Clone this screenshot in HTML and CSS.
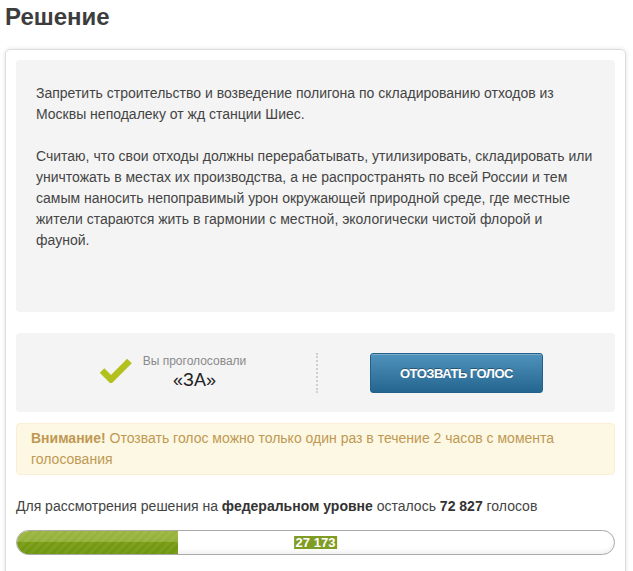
FILE: index.html
```html
<!DOCTYPE html>
<html lang="ru">
<head>
<meta charset="utf-8">
<title>Решение</title>
<link rel="stylesheet" href="styles.css">
</head>
<body>
<h1 class="title">Решение</h1>
<div class="card">
  <div class="text-box">
    <p>Запретить строительство и возведение полигона по складированию отходов из Москвы неподалеку от жд станции Шиес.</p>
    <p>Считаю, что свои отходы должны перерабатывать, утилизировать, складировать или уничтожать в местах их производства, а не распространять по всей России и тем самым наносить непоправимый урон окружающей природной среде, где местные жители стараются жить в гармонии с местной, экологически чистой флорой и фауной.</p>
  </div>
  <div class="vote-box">
    <div class="vote-left">
      <svg class="check" width="32" height="24" viewBox="0 0 32 24"><path d="M2 11.5 L11 20.5 L29.5 2" fill="none" stroke="#b3c11f" stroke-width="6.5" stroke-linecap="butt" stroke-linejoin="miter"/></svg>
      <div class="vote-info">
        <div class="vote-label">Вы проголосовали</div>
        <div class="vote-value">«ЗА»</div>
      </div>
    </div>
    <div class="vote-right">
      <button class="revoke">ОТОЗВАТЬ ГОЛОС</button>
    </div>
  </div>
  <div class="alert"><b>Внимание!</b> Отозвать голос можно только один раз в течение 2 часов с момента голосования</div>
  <p class="remain">Для рассмотрения решения на <b>федеральном уровне</b> осталось <b>72 827</b> голосов</p>
  <div class="progress">
    <div class="progress-fill" style="width:27%"></div>
    <span class="progress-label">27 173</span>
  </div>
</div>
</body>
</html>
```
FILE: styles.css
```css
* { box-sizing: border-box; }
html, body { background: #fff; }
body {
  margin: 0;
  padding: 0 7px 0 5px;
  font-family: "Liberation Sans", Arial, sans-serif;
  font-size: 14px;
  color: #444;
}
.title {
  margin: 3px 0 18px 0;
  font-size: 24px;
  line-height: 28px;
  font-weight: bold;
  color: #3d3d3d;
}
.card {
  border: 1px solid #dcdcdc;
  border-radius: 5px;
  box-shadow: 0 0 4px rgba(0,0,0,0.12);
  padding: 10px 10px 16px 10px;
  height: 560px;
}
.text-box {
  background: #f4f4f4;
  border-radius: 4px;
  padding: 23px 20px 61px 20px;
  line-height: 21px;
}
.text-box p { margin: 0; }
.text-box p + p { margin-top: 21px; }
.vote-box {
  margin-top: 21px;
  background: #f4f4f4;
  border-radius: 4px;
  display: grid;
  grid-template-columns: 300px 1fr;
  height: 79px;
}
.vote-left {
  display: flex;
  align-items: center;
  justify-content: center;
  padding-left: 14px;
}
.check { margin-right: 11px; margin-top: -3px; }
.vote-info { display: flex; flex-direction: column; align-items: center; }
.vote-label {
  font-size: 12px;
  line-height: 15px;
  color: #8a8a8a;
}
.vote-value {
  font-size: 18px;
  line-height: 22px;
  color: #222;
}
.vote-right {
  margin: 20px 0 19px 0;
  border-left: 2px dotted #cfcfcf;
  padding-left: 52px;
}
.revoke {
  display: block;
  width: 173px;
  height: 40px;
  border: 1px solid #23608a;
  border-radius: 3px;
  background: linear-gradient(#4f92bb, #256690);
  box-shadow: inset 0 1px 0 rgba(255,255,255,0.25);
  color: #fff;
  font-family: "Liberation Sans", Arial, sans-serif;
  font-weight: bold;
  font-size: 13px;
  letter-spacing: -0.5px;
  text-shadow: 0 -1px 0 rgba(0,0,0,0.35);
  padding: 0;
  cursor: pointer;
}
.alert {
  margin-top: 11px;
  background: #fcf8e3;
  border: 1px solid #fbeed5;
  border-radius: 4px;
  color: #c09853;
  padding: 4px 14px 4px 14px;
  line-height: 21px;
}
.alert b { color: #c09853; }
.remain {
  margin: 21px 0 0 0;
  line-height: 21px;
  color: #444;
}
.remain b { color: #333; }
.progress {
  position: relative;
  margin-top: 13px;
  height: 25px;
  border: 1px solid #a9a9a9;
  border-radius: 13px;
  background: #fff;
  box-shadow: inset 0 -3px 4px rgba(0,0,0,0.06);
  overflow: hidden;
}
.progress-fill {
  height: 100%;
  border-radius: 12px 0 0 12px;
  background:
    repeating-linear-gradient(135deg, rgba(255,255,255,0.06) 0 3px, rgba(0,0,0,0) 3px 6px),
    linear-gradient(#9ab53f 0%, #94b13a 45%, #769b12 50%, #6f9610 100%);
}
.progress-label {
  position: absolute;
  left: 50%;
  top: 5px;
  transform: translateX(-50%);
  background: #7f9c25;
  color: #fff;
  font-weight: bold;
  font-size: 13px;
  line-height: 13px;
  padding: 0 2px;
}
```
